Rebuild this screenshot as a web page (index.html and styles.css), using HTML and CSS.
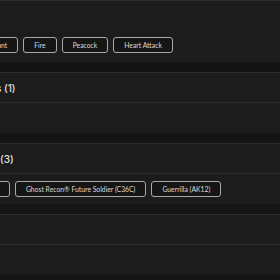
FILE: index.html
```html
<!DOCTYPE html>
<html lang="en">
<head>
    <meta charset="UTF-8">
    <meta name="viewport" content="width=device-width, initial-scale=1.0">
    <title>Loadout</title>
    <link rel="stylesheet" href="styles.css">
</head>
<body>
    <div class="loadout">
        <!-- Reticles -->
        <section class="group">
            <div class="group-head">Reticles (4)</div>
            <div class="group-body group-body--tall">
                <span class="chip">Elephant</span>
                <span class="chip">Fire</span>
                <span class="chip">Peacock</span>
                <span class="chip">Heart Attack</span>
            </div>
        </section>

        <!-- Charms -->
        <section class="group">
            <div class="group-head">Charms (1)</div>
            <div class="group-body"></div>
        </section>

        <!-- Camos -->
        <section class="group">
            <div class="group-head">Camos (3)</div>
            <div class="group-body">
                <span class="chip">Ice (4)</span>
                <span class="chip">Ghost Recon® Future Soldier (C36C)</span>
                <span class="chip">Guerrilla (AK12)</span>
            </div>
        </section>

        <section class="group">
            <div class="group-head"></div>
            <div class="group-body"></div>
        </section>
    </div>
</body>
</html>
```

FILE: styles.css
```css
* {
    box-sizing: border-box;
    margin: 0;
    padding: 0;
}

body {
    font-family: Inter, "Noto Sans", sans-serif;
    background-color: #141414;
    color: #dcdcdc;
    overflow: hidden;
}

.loadout {
    margin-top: -30px;
    margin-left: -36px;
    display: flex;
    flex-direction: column;
    gap: 10px;
}

.group {
    background-color: #1c1c1c;
    border-top: 1px solid #2c2c2c;
}

.group-head {
    height: 30px;
    display: flex;
    align-items: center;
    font-size: 10px;
    font-weight: 500;
    color: #e2e2e2;
    border-bottom: 1px solid #2c2c2c;
}

.group-body {
    display: flex;
    flex-wrap: wrap;
    gap: 5px;
    padding: 7px 0 7px 6px;
    min-height: 30px;
}

.group-body--tall {
    padding-top: 36px;
    padding-bottom: 9px;
}

.chip {
    display: inline-flex;
    align-items: center;
    height: 16px;
    padding: 0 10px;
    font-family: Lato, Inter, sans-serif;
    font-size: 6.8px;
    color: #dadada;
    background-color: #151515;
    border: 1px solid #a9a9a9;
    border-radius: 3px;
    white-space: nowrap;
}
```
